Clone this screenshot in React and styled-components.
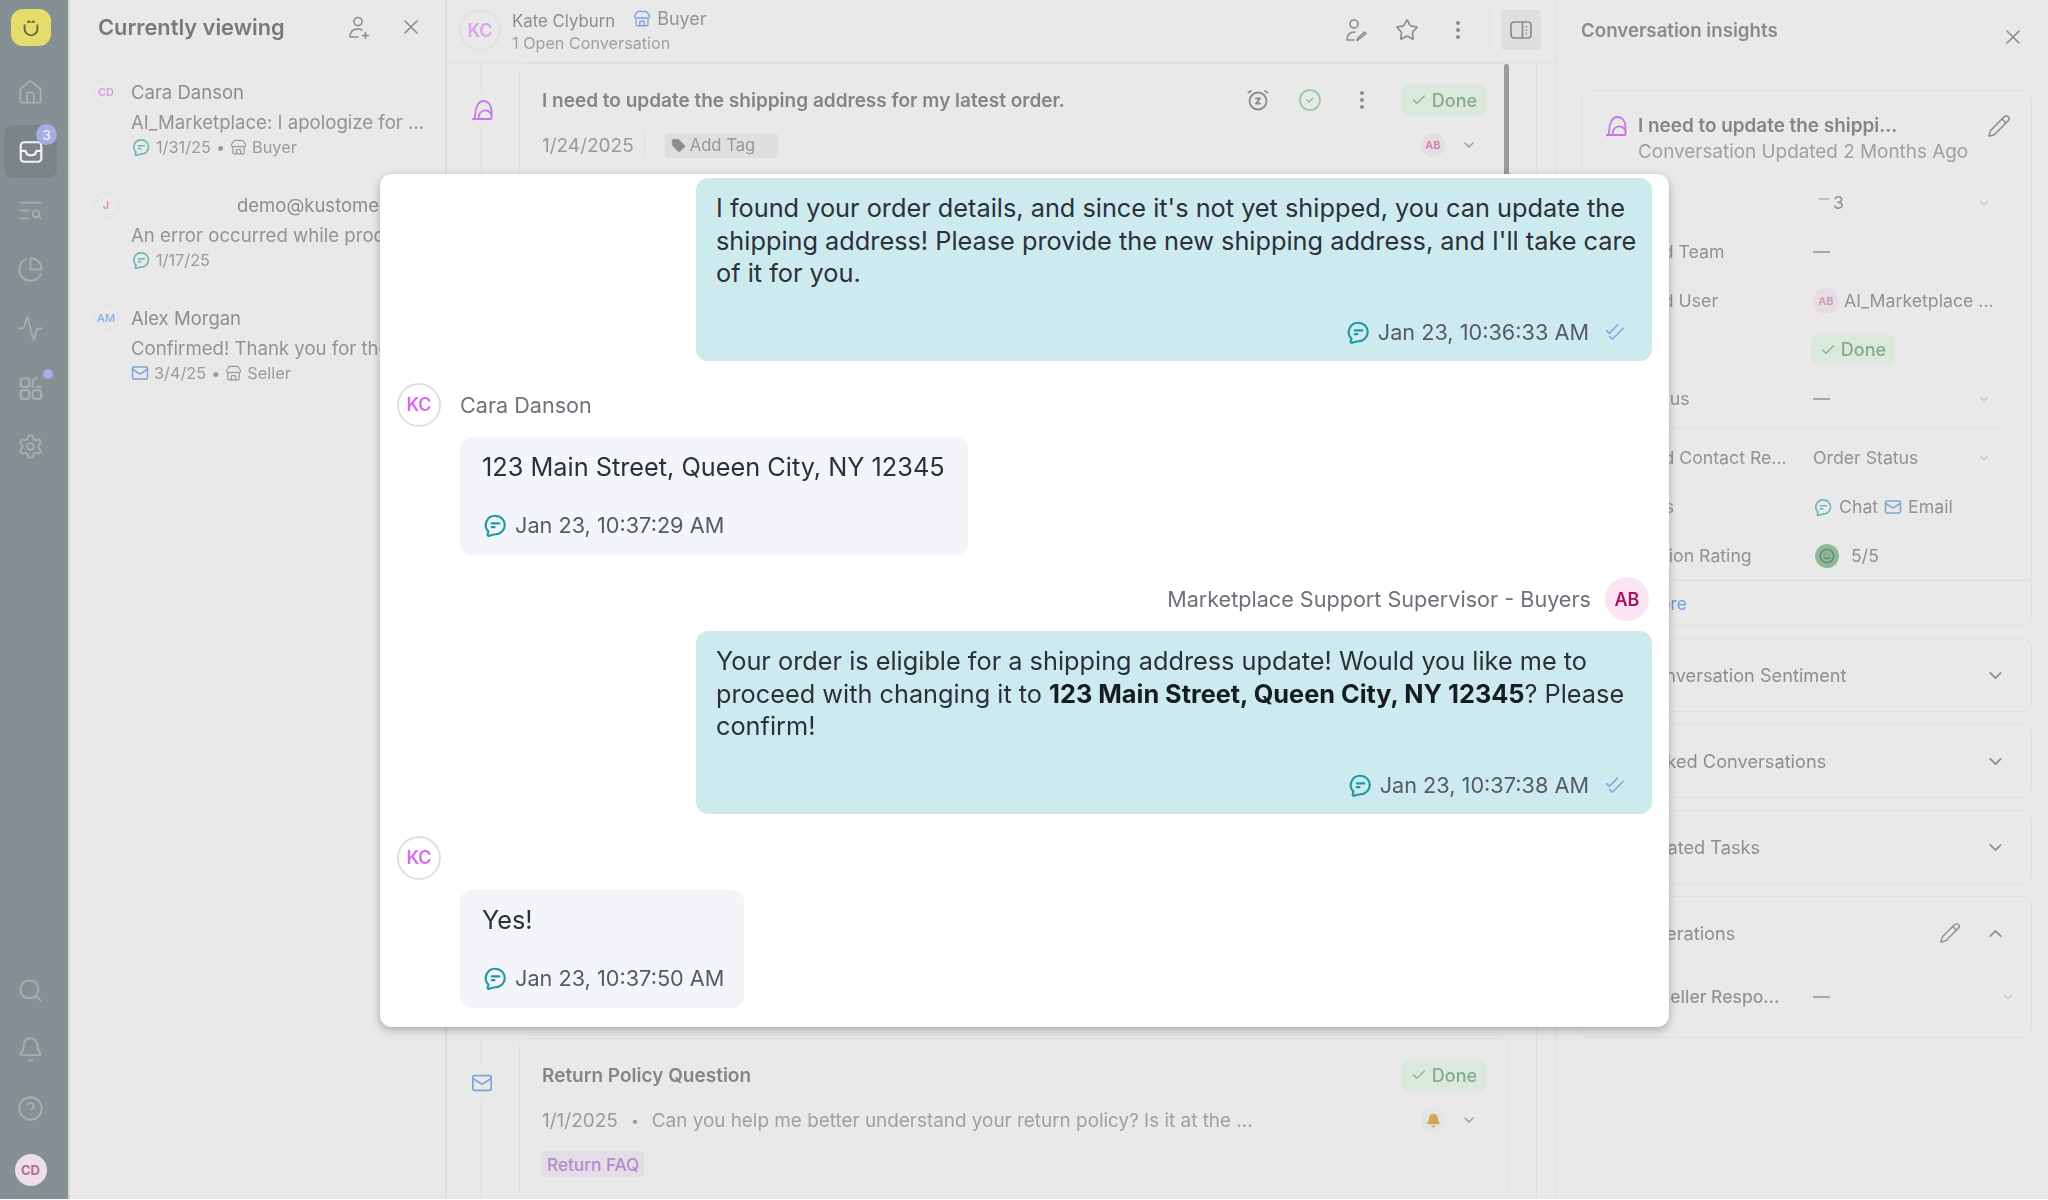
import React from 'react'
import styled, { createGlobalStyle } from 'styled-components'
import {
  Activity, Bell, Check, ChevronDown, ChevronUp, CircleCheck, CircleHelp,
  ChartPie, EllipsisVertical, House, Mail, Pencil, Search, Settings, Smile, Star, Store, Tag, TextSearch, X,
} from 'lucide-react'

const GlobalStyle = createGlobalStyle`
  html, body { margin: 0; padding: 0; background: #fff; }
  body { font-family: Inter, "Liberation Sans", sans-serif; overflow: hidden; }
  * { box-sizing: border-box; }
`

const ChatIcon = ({ size = 26, color = '#1f9aa5', width = 2 }) => (
  <svg width={size} height={size} viewBox="0 0 24 24" fill="none" stroke={color} strokeWidth={width} strokeLinecap="round" strokeLinejoin="round">
    <path d="M12.500 3.500a8.500 8.500 0 0 1 0 17c-2 0-4 .7-6 1.500-.8.3-1.600-.5-1.300-1.300l.8-2.700A8.500 8.500 0 0 1 12.500 3.500Z" />
    <path d="M9 10.500h7M9 14h2.500" />
  </svg>
)

const ReadIcon = () => (
  <svg width="22" height="22" viewBox="0 0 24 24" fill="none" stroke="#7ea4dc" strokeWidth="1.600" strokeLinecap="round" strokeLinejoin="round">
    <path d="M3 10.500l3 3L15 4" />
    <path d="M6 17l3 3L21 8" />
  </svg>
)

const BotIcon = ({ size = 24 }) => (
  <svg width={size} height={size} viewBox="0 0 24 24" fill="none" stroke="#c678e6" strokeWidth="1.800" strokeLinecap="round" strokeLinejoin="round">
    <path d="M3 21.500c1.500-.5 2-1.500 2-3C5 10 8 3 13.500 3c4.500 0 8 4 8 10v7.500a.5.5 0 0 1-.5.5H3Z" />
    <path d="M9 21a6 6 0 0 1 12.500-4" />
  </svg>
)

const LogoIcon = () => (
  <svg width="22" height="22" viewBox="0 0 24 24" fill="none" stroke="#62663c" strokeWidth="2" strokeLinecap="round">
    <path d="M5 9v4a7 7 0 0 0 14 0V9" />
    <path d="M8.500 5.500c.6-.8 1.600-.8 2.200 0M13.300 5.500c.6-.8 1.600-.8 2.200 0" />
  </svg>
)

const InboxIcon = () => (
  <svg width="26" height="26" viewBox="0 0 24 24" fill="none" stroke="#eef2f2" strokeWidth="2" strokeLinecap="round" strokeLinejoin="round">
    <rect x="2.500" y="3" width="19" height="18" rx="3" />
    <path d="M2.500 11h4.500c.5 2.500 2.500 4 5 4s4.500-1.500 5-4h4.500" />
  </svg>
)

const AppsIcon = () => (
  <svg width="26" height="26" viewBox="0 0 24 24" fill="none" stroke="#a3b0b0" strokeWidth="2" strokeLinecap="round">
    <rect x="2.500" y="3" width="8" height="8" rx="2.500" />
    <path d="M13.500 11V7a4 4 0 0 1 4-4M21.500 11h-4" />
    <rect x="2.500" y="14" width="8" height="8" rx="2.500" />
    <rect x="13.500" y="14" width="8" height="8" rx="2.500" />
  </svg>
)

const AssignAddIcon = () => (
  <svg width="24" height="24" viewBox="0 0 24 24" fill="none" stroke="#8c8c8c" strokeWidth="1.600" strokeLinecap="round">
    <circle cx="11" cy="6.500" r="4" />
    <path d="M3 22c0-5 3-8 8-8 1.500 0 3 .3 4 1M3 22h8M15.500 20.500h6M18.500 17.500v6" />
  </svg>
)

const AssignEditIcon = () => (
  <svg width="24" height="24" viewBox="0 0 24 24" fill="none" stroke="#8c8c8c" strokeWidth="1.600" strokeLinecap="round" strokeLinejoin="round">
    <circle cx="10" cy="6" r="4" />
    <path d="M3 22c0-5 3-8 8-8M3 22h7M14 22l-1 .5.500-2 7-6.500 1.500 1.500Z" />
  </svg>
)

const PanelIcon = () => (
  <svg width="24" height="24" viewBox="0 0 24 24" fill="none" stroke="#8c8c8c" strokeWidth="1.700" strokeLinecap="round">
    <rect x="2" y="4" width="20" height="16" rx="3" />
    <path d="M13.500 4v16M17.500 8.500v.1M17.500 12v.1M17.500 15.500v.1" />
  </svg>
)

const SnoozeIcon = () => (
  <svg width="24" height="24" viewBox="0 0 24 24" fill="none" stroke="#8c8c8c" strokeWidth="1.800" strokeLinecap="round" strokeLinejoin="round">
    <circle cx="12" cy="13" r="8.500" />
    <path d="M2.500 4.500 5 3M21.500 4.500 19 3M10 10.500h4l-4 5h4" />
  </svg>
)

const Page = styled.div`
  position: relative;
  width: 2048px;
  height: 1199px;
  overflow: hidden;
  background: #e9e9e9;
  color: #8b8b8b;
`

const Background = styled.div`
  display: grid;
  grid-template-columns: 70px 377px 1110px 491px;
  height: 100%;
  filter: blur(0.35px);
`

const Rail = styled.nav`
  display: flex;
  flex-direction: column;
  justify-content: space-between;
  align-items: center;
  padding: 9px 7px 13px 0;
  background: #868f93;
  border-right: 2px solid #d6d6d6;
`

const RailGroup = styled.div`
  display: flex;
  flex-direction: column;
  align-items: center;
`

const Logo = styled.div`
  display: flex;
  align-items: center;
  justify-content: center;
  width: 40px;
  height: 37px;
  margin-bottom: 20px;
  border-radius: 12px;
  background: #e6dc6b;
`

const RailItem = styled.div`
  position: relative;
  display: flex;
  align-items: center;
  justify-content: center;
  width: 53px;
  height: 53px;
  margin-bottom: 6px;
  border-radius: 9px;
  color: #a3b0b0;
  background: ${p => (p.$active ? '#7c8488' : 'transparent')};
`

const Badge = styled.span`
  position: absolute;
  top: -1px;
  right: 0;
  display: flex;
  align-items: center;
  justify-content: center;
  width: 21px;
  height: 21px;
  border-radius: 50%;
  background: #a6ace4;
  color: #eef;
  font-size: 13px;
  font-weight: 500;
`

const Dot = styled.span`
  position: absolute;
  top: 8px;
  right: 4px;
  width: 10px;
  height: 10px;
  border-radius: 50%;
  background: #a6ace4;
`

const RailAvatar = styled.div`
  display: flex;
  align-items: center;
  justify-content: center;
  width: 32px;
  height: 32px;
  margin-top: 13px;
  border-radius: 50%;
  background: #ecdfe8;
  color: #b56f96;
  font-size: 13px;
  font-weight: 700;
`

const ListPanel = styled.section`
  display: flex;
  flex-direction: column;
  min-width: 0;
  border-right: 2px solid #dedede;
  overflow: hidden;
`

const ListHeader = styled.header`
  display: flex;
  align-items: center;
  height: 54px;
  padding: 0 22px 0 28px;
  margin-bottom: 25px;
`

const ListTitle = styled.h1`
  flex: 1;
  margin: 0;
  color: #777a7d;
  font-size: 21.800px;
  font-weight: 600;
`

const HeaderIcons = styled.div`
  display: flex;
  align-items: center;
  gap: ${p => p.$gap || 28}px;
  color: #8c8c8c;
`

const ListRow = styled.article`
  display: flex;
  gap: 12px;
  height: 113px;
  padding-left: 23px;
`

const Avatar = styled.div`
  flex: none;
  display: flex;
  align-items: center;
  justify-content: center;
  width: ${p => p.$size || 26}px;
  height: ${p => p.$size || 26}px;
  border: ${p => (p.$plain ? 'none' : `${p.$size > 36 ? 2 : 1}px solid #e0e0e0`)};
  border-radius: 50%;
  background: ${p => p.$bg || 'transparent'};
  color: ${p => p.$color || '#d79ae8'};
  font-size: ${p => p.$font || 11}px;
  font-weight: 600;
`

const RowText = styled.div`
  display: flex;
  flex-direction: column;
  min-width: 0;
  white-space: nowrap;
`

const RowName = styled.div`
  height: 26px;
  line-height: 26px;
  margin-left: ${p => p.$indent || 0}px;
  font-size: 18.500px;
  color: #8d8d8d;
`

const RowMessage = styled.div`
  height: 30px;
  padding-top: 4px;
  line-height: 26px;
  font-size: 18.600px;
  color: #939393;
`

const RowMeta = styled.div`
  display: flex;
  align-items: center;
  gap: 5px;
  height: 24px;
  font-size: 16.300px;
  color: #9a9a9a;
`

const ThreadPanel = styled.section`
  display: flex;
  flex-direction: column;
  min-width: 0;
  border-right: 1px solid #dedede;
  overflow: hidden;
`

const ThreadHeader = styled.header`
  flex: none;
  display: flex;
  align-items: center;
  height: 63px;
  padding: 0 15px 2px 12px;
  border-bottom: 1px solid #dfdfdf;
`

const HeaderNames = styled.div`
  flex: 1;
  margin-left: 11px;
`

const NameLine = styled.div`
  display: flex;
  align-items: center;
  height: 28px;
  font-size: 16.800px;
  color: #8d8d8d;
`

const BuyerChip = styled.span`
  display: inline-flex;
  align-items: center;
  gap: 6px;
  margin: -5px 0 0 18px;
  font-size: 18px;
  color: #939393;
`

const OpenCount = styled.div`
  margin-top: -2px;
  font-size: 16.200px;
  line-height: 20px;
  color: #a0a0a0;
`

const HeaderDivider = styled.span`
  width: 1px;
  height: 40px;
  margin: 0 11px 0 19px;
  background: #dfdfdf;
`

const PanelToggle = styled.button`
  display: flex;
  align-items: center;
  justify-content: center;
  width: 40px;
  height: 40px;
  padding: 0;
  border: none;
  border-radius: 4px;
  background: #dfdfe1;
`

const ThreadBody = styled.div`
  flex: 1;
  display: flex;
  flex-direction: column;
  gap: 12px;
  margin-right: 19px;
  padding-right: 27px;
  border-right: 1px solid #dfdfdf;
  overflow: hidden;
`

const Entry = styled.div`
  flex: none;
  position: relative;
  display: flex;
  height: ${p => p.$height}px;
`

const EntryRail = styled.div`
  flex: none;
  position: relative;
  width: 72px;
  &::before {
    content: '';
    position: absolute;
    top: 0;
    bottom: 0;
    left: 34px;
    width: 1px;
    background: #dcdcdc;
  }
`

const EntryIcon = styled.div`
  position: absolute;
  top: ${p => p.$top}px;
  left: 23px;
  display: flex;
  align-items: center;
  justify-content: center;
  width: 24px;
  height: 32px;
  background: #e9e9e9;
`

const Card = styled.article`
  flex: 1;
  min-width: 0;
  position: relative;
  padding: 20px 22px 0;
  border: 1px solid #e0e0e0;
  border-radius: 8px;
`

const Thumb = styled.span`
  position: absolute;
  top: 0;
  right: -1px;
  width: 5px;
  height: 112px;
  border-radius: 3px 3px 0 0;
  background: #9b9b9b;
`

const CardRow = styled.div`
  display: flex;
  align-items: center;
  height: ${p => p.$height}px;
  margin-bottom: ${p => p.$after || 0}px;
`

const CardTitle = styled.h3`
  flex: 1;
  margin: 0;
  font-size: 19px;
  font-weight: 600;
  color: #858585;
`

const DonePill = styled.span`
  display: inline-flex;
  align-items: center;
  justify-content: center;
  gap: 5px;
  width: 84px;
  height: ${p => p.$height || 32}px;
  margin-left: ${p => p.$left || 0}px;
  border-radius: 7px;
  background: #dbe8dc;
  color: #86aa8f;
  font-size: 18px;
  font-weight: 500;
`

const DateText = styled.span`
  font-size: 19px;
  color: #9a9a9a;
`

const CardDivider = styled.span`
  width: 1px;
  height: 28px;
  margin: 0 20px 0 10px;
  background: #dcdcdc;
`

const AddTag = styled.span`
  display: inline-flex;
  align-items: center;
  gap: 4px;
  width: 113px;
  height: 25px;
  padding-left: 6px;
  border-radius: 4px;
  background: #dfdfe1;
  color: #979797;
  font-size: 16.600px;
`

const Spacer = styled.span`
  flex: 1;
`

const CardEnd = styled.span`
  display: flex;
  align-items: center;
  gap: 16px;
  margin-right: 9px;
  color: #999;
`

const Separator = styled.span`
  margin: 0 13px;
  font-size: 14px;
  color: #9a9a9a;
`

const Preview = styled.span`
  font-size: 18.900px;
  color: #a0a0a0;
`

const FaqTag = styled.span`
  display: inline-flex;
  align-items: center;
  height: 26px;
  padding: 0 5px;
  border-radius: 4px;
  background: #e2dde6;
  color: #b58ccb;
  font-size: 17.200px;
  font-weight: 500;
`

const BellMark = styled.span`
  display: flex;
  align-items: center;
  justify-content: center;
  width: 24px;
  height: 24px;
  border-radius: 50%;
  background: #e4e4e4;
  color: #c9a95c;
`

const InsightsPanel = styled.aside`
  display: flex;
  flex-direction: column;
  padding: 0 16px 0 24px;
`

const InsightsHeader = styled.header`
  display: flex;
  justify-content: space-between;
  height: 90px;
  padding: 19px 7px 0 0;
  color: #8c8c8c;
`

const InsightsTitle = styled.h2`
  margin: 0;
  font-size: 18.700px;
  font-weight: 600;
  color: #8b8b8b;
`

const CloseSlot = styled.span`
  margin-top: 6px;
`

const InsightsStack = styled.div`
  display: flex;
  flex-direction: column;
  gap: 12px;
`

const Box = styled.section`
  border: 1px solid #e0e0e2;
  border-radius: 9px;
`

const SummaryHead = styled.div`
  display: flex;
  gap: 10px;
  height: 87px;
  padding: 23px 20px 0 22px;
`

const SummaryText = styled.div`
  flex: 1;
  white-space: nowrap;
`

const SummaryTitle = styled.div`
  height: 26px;
  font-size: 18.900px;
  font-weight: 600;
  color: #858585;
`

const SummarySub = styled.div`
  font-size: 18.900px;
  color: #a0a0a0;
`

const InfoRow = styled.div`
  display: grid;
  grid-template-columns: 217px 1fr 30px;
  align-items: center;
  height: 49px;
  padding: 0 32px 0 14px;
  font-size: 17.700px;
  color: #929292;
  svg.caret {
    justify-self: center;
  }
`

const InfoValue = styled.div`
  display: flex;
  align-items: center;
  gap: ${p => p.$gap || 6}px;
  white-space: nowrap;
`

const Dash = styled.span`
  width: 17px;
  height: 2px;
  background: #a8a8a8;
`

const ScoreMark = styled.span`
  width: 10px;
  height: 2px;
  margin: -8px 0 0 6px;
  background: #a6ccc4;
`

const RowDivider = styled.div`
  height: 1px;
  margin: 5px 32px 4px 23px;
  background: #e0e0e0;
`

const ShowMore = styled.div`
  height: 45px;
  padding: 13px 0 0 14px;
  border-top: 1px solid #dedee0;
  color: #6f9be0;
  font-size: 17px;
`

const FaceMark = styled.span`
  display: flex;
  align-items: center;
  justify-content: center;
  width: 24px;
  height: 24px;
  margin: 0 2px 0 2px;
  border-radius: 50%;
  background: #8fb79a;
  color: #5f8a6c;
`

const AccordionHead = styled.div`
  display: flex;
  align-items: center;
  gap: 24px;
  height: 72px;
  padding: 0 25px 0 59px;
  font-size: 18.200px;
  color: #8e8e8e;
`

const AccordionTitle = styled.span`
  flex: 1;
`

const SubRow = styled.div`
  display: grid;
  grid-template-columns: 154px 1fr 30px;
  align-items: center;
  height: 55px;
  padding: 0 8px 0 77px;
  margin-bottom: 13px;
  font-size: 17.500px;
  font-weight: 500;
  color: #939393;
  svg.caret {
    justify-self: center;
  }
`

const Modal = styled.div`
  position: absolute;
  top: 174px;
  left: 380px;
  display: flex;
  flex-direction: column;
  gap: 22px;
  width: 1289px;
  height: 853px;
  padding: 4px 17px 0;
  border-radius: 12px;
  background: #fff;
  box-shadow: 0 3px 10px rgba(0, 0, 0, 0.28);
  overflow: hidden;
`

const Message = styled.div`
  display: flex;
  flex-direction: column;
  gap: 10px;
  align-items: ${p => (p.$out ? 'flex-end' : 'flex-start')};
`

const Sender = styled.div`
  display: flex;
  align-items: center;
  gap: ${p => (p.$out ? 14 : 19)}px;
  height: 44px;
  margin-right: ${p => (p.$out ? 3 : 0)}px;
  font-size: 21.600px;
  color: #6d7178;
`

const Bubble = styled.div`
  width: ${p => p.$width}px;
  margin-left: ${p => (p.$out ? 0 : 63)}px;
  padding: ${p => (p.$out ? '14px 12px 17px 20px' : '14px 12px 18px 22px')};
  border-radius: 12px;
  background: ${p => (p.$out ? '#cdebef' : '#f4f5f9')};
`

const BubbleText = styled.p`
  margin: 0 0 30px;
  font-size: 25.300px;
  line-height: 32.500px;
  color: #2b3138;
  strong {
    font-weight: 700;
    color: #161c24;
  }
`

const Stamp = styled.div`
  display: flex;
  align-items: center;
  justify-content: ${p => (p.$out ? 'flex-end' : 'flex-start')};
  gap: 7px;
  height: 24px;
  padding-right: ${p => (p.$out ? 14 : 0)}px;
  font-size: 21.700px;
  color: #555b63;
  white-space: nowrap;
`

const ReadMark = styled.span`
  display: flex;
  margin-left: 8px;
`

const rows = [
  { initials: 'CD', color: '#d79ae8', name: 'Cara Danson', text: 'AI_Marketplace: I apologize for ...', date: '1/31/25', kind: 'Buyer', chat: true },
  { initials: 'J', color: '#e58a8a', name: 'demo@kustomer.com', indent: 106, text: 'An error occurred while processing your request', date: '1/17/25', chat: true },
  { initials: 'AM', color: '#8fb2ea', name: 'Alex Morgan', text: 'Confirmed! Thank you for the help with my order', date: '3/4/25', kind: 'Seller' },
]

const Caret = () => <ChevronDown className="caret" size={14} color="#c4c4c4" />

const App = () => {
  return (
    <>
      <GlobalStyle />
      <Page>
        <Background>
          <Rail>
            <RailGroup>
              <Logo><LogoIcon /></Logo>
              <RailItem><House size={27} strokeWidth={1.7} /></RailItem>
              <RailItem $active><InboxIcon /><Badge>3</Badge></RailItem>
              <RailItem><TextSearch size={27} strokeWidth={1.7} /></RailItem>
              <RailItem><ChartPie size={27} strokeWidth={1.7} /></RailItem>
              <RailItem><Activity size={27} strokeWidth={1.7} /></RailItem>
              <RailItem><AppsIcon /><Dot /></RailItem>
              <RailItem><Settings size={27} strokeWidth={1.7} /></RailItem>
            </RailGroup>
            <RailGroup>
              <RailItem><Search size={27} strokeWidth={1.7} /></RailItem>
              <RailItem><Bell size={27} strokeWidth={1.7} /></RailItem>
              <RailItem><CircleHelp size={27} strokeWidth={1.7} /></RailItem>
              <RailAvatar>CD</RailAvatar>
            </RailGroup>
          </Rail>

          <ListPanel>
            <ListHeader>
              <ListTitle>Currently viewing</ListTitle>
              <HeaderIcons $gap={28}>
                <AssignAddIcon />
                <X size={24} strokeWidth={1.6} />
              </HeaderIcons>
            </ListHeader>
            {rows.map(row => (
              <ListRow key={row.initials}>
                <Avatar $color={row.color}>{row.initials}</Avatar>
                <RowText>
                  <RowName $indent={row.indent}>{row.name}</RowName>
                  <RowMessage>{row.text}</RowMessage>
                  <RowMeta>
                    {row.chat ? <ChatIcon size={20} color="#6cb6b4" /> : <Mail size={18} color="#7ea4dc" />}
                    {row.date}
                    {row.kind && <>
                      <span>•</span>
                      <Store size={17} strokeWidth={1.7} />
                      {row.kind}
                    </>}
                  </RowMeta>
                </RowText>
              </ListRow>
            ))}
          </ListPanel>

          <ThreadPanel>
            <ThreadHeader>
              <Avatar $size={42} $font={18} $color="#dba6ea">KC</Avatar>
              <HeaderNames>
                <NameLine>
                  Kate Clyburn
                  <BuyerChip><Store size={18} color="#7ea4dc" strokeWidth={1.8} />Buyer</BuyerChip>
                </NameLine>
                <OpenCount>1 Open Conversation</OpenCount>
              </HeaderNames>
              <HeaderIcons $gap={27}>
                <AssignEditIcon />
                <Star size={24} strokeWidth={1.6} />
                <EllipsisVertical size={24} strokeWidth={2} />
              </HeaderIcons>
              <HeaderDivider />
              <PanelToggle><PanelIcon /></PanelToggle>
            </ThreadHeader>
            <ThreadBody>
              <Entry $height={963}>
                <EntryRail>
                  <EntryIcon $top={31}><BotIcon /></EntryIcon>
                </EntryRail>
                <Card>
                  <Thumb />
                  <CardRow $height={32} $after={15}>
                    <CardTitle>I need to update the shipping address for my latest order.</CardTitle>
                    <HeaderIcons $gap={28}>
                      <SnoozeIcon />
                      <CircleCheck size={24} color="#8ccb97" strokeWidth={1.6} />
                      <EllipsisVertical size={24} strokeWidth={2} />
                    </HeaderIcons>
                    <DonePill $left={28}><Check size={16} strokeWidth={1.8} />Done</DonePill>
                  </CardRow>
                  <CardRow $height={28}>
                    <DateText>1/24/2025</DateText>
                    <CardDivider />
                    <AddTag><Tag size={15} fill="#8d8d8d" strokeWidth={1} />Add Tag</AddTag>
                    <Spacer />
                    <CardEnd>
                      <Avatar $size={24} $plain $bg="#e6dde3" $color="#cf7fa9">AB</Avatar>
                      <ChevronDown size={16} />
                    </CardEnd>
                  </CardRow>
                </Card>
              </Entry>
              <Entry $height={162}>
                <EntryRail>
                  <EntryIcon $top={29}><Mail size={22} color="#7ea4dc" strokeWidth={1.9} /></EntryIcon>
                </EntryRail>
                <Card>
                  <CardRow $height={32} $after={15}>
                    <CardTitle>Return Policy Question</CardTitle>
                    <DonePill><Check size={16} strokeWidth={1.8} />Done</DonePill>
                  </CardRow>
                  <CardRow $height={28} $after={17}>
                    <DateText>1/1/2025</DateText>
                    <Separator>•</Separator>
                    <Preview>Can you help me better understand your return policy? Is it at the ...</Preview>
                    <Spacer />
                    <CardEnd>
                      <BellMark><Bell size={15} fill="#c9a95c" /></BellMark>
                      <ChevronDown size={16} />
                    </CardEnd>
                  </CardRow>
                  <FaqTag>Return FAQ</FaqTag>
                </Card>
              </Entry>
            </ThreadBody>
          </ThreadPanel>

          <InsightsPanel>
            <InsightsHeader>
              <InsightsTitle>Conversation insights</InsightsTitle>
              <CloseSlot><X size={24} strokeWidth={1.6} /></CloseSlot>
            </InsightsHeader>
            <InsightsStack>
              <Box>
                <SummaryHead>
                  <BotIcon />
                  <SummaryText>
                    <SummaryTitle>I need to update the shippi...</SummaryTitle>
                    <SummarySub>Conversation Updated 2 Months Ago</SummarySub>
                  </SummaryText>
                  <Pencil size={24} strokeWidth={1.5} />
                </SummaryHead>
                <InfoRow>Priority<InfoValue $gap={4}><ScoreMark />3</InfoValue><Caret /></InfoRow>
                <InfoRow>Assigned Team<InfoValue><Dash /></InfoValue></InfoRow>
                <InfoRow>Assigned User<InfoValue $gap={5}><Avatar $size={26} $plain $bg="#e6dde3" $color="#d195b5">AB</Avatar>AI_Marketplace ...</InfoValue></InfoRow>
                <InfoRow>Status<InfoValue><DonePill $height={30} $left={-2}><Check size={16} strokeWidth={1.8} />Done</DonePill></InfoValue></InfoRow>
                <InfoRow>Sub-Status<InfoValue><Dash /></InfoValue><Caret /></InfoRow>
                <RowDivider />
                <InfoRow>Expected Contact Re...<InfoValue>Order Status</InfoValue><Caret /></InfoRow>
                <InfoRow>Channels<InfoValue><ChatIcon size={20} color="#6cb6b4" />Chat<Mail size={18} color="#7ea4dc" />Email</InfoValue></InfoRow>
                <InfoRow>Satisfaction Rating<InfoValue $gap={10}><FaceMark><Smile size={16} /></FaceMark>5/5</InfoValue></InfoRow>
                <ShowMore>Show more</ShowMore>
              </Box>
              <Box><AccordionHead><AccordionTitle>Conversation Sentiment</AccordionTitle><ChevronDown size={21} /></AccordionHead></Box>
              <Box><AccordionHead><AccordionTitle>Linked Conversations</AccordionTitle><ChevronDown size={21} /></AccordionHead></Box>
              <Box><AccordionHead><AccordionTitle>Related Tasks</AccordionTitle><ChevronDown size={21} /></AccordionHead></Box>
              <Box>
                <AccordionHead>
                  <AccordionTitle>Operations</AccordionTitle>
                  <Pencil size={22} strokeWidth={1.5} />
                  <ChevronUp size={21} />
                </AccordionHead>
                <SubRow>Seller Respo...<InfoValue><Dash /></InfoValue><Caret /></SubRow>
              </Box>
            </InsightsStack>
          </InsightsPanel>
        </Background>

        <Modal>
          <Message $out>
            <Bubble $out $width={956}>
              <BubbleText>I found your order details, and since it's not yet shipped, you can update the shipping address! Please provide the new shipping address, and I'll take care of it for you.</BubbleText>
              <Stamp $out>
                <ChatIcon />
                Jan 23, 10:36:33 AM
                <ReadMark><ReadIcon /></ReadMark>
              </Stamp>
            </Bubble>
          </Message>

          <Message>
            <Sender><Avatar $size={44} $font={18} $color="#d56bf0">KC</Avatar>Cara Danson</Sender>
            <Bubble $width={508}>
              <BubbleText>123 Main Street, Queen City, NY 12345</BubbleText>
              <Stamp>
                <ChatIcon />
                Jan 23, 10:37:29 AM
              </Stamp>
            </Bubble>
          </Message>

          <Message $out>
            <Sender $out>
              Marketplace Support Supervisor - Buyers
              <Avatar $size={44} $font={18} $plain $bg="#fbe4f3" $color="#a8145f">AB</Avatar>
            </Sender>
            <Bubble $out $width={956}>
              <BubbleText>Your order is eligible for a shipping address update! Would you like me to proceed with changing it to <strong>123 Main Street, Queen City, NY 12345</strong>? Please confirm!</BubbleText>
              <Stamp $out>
                <ChatIcon />
                Jan 23, 10:37:38 AM
                <ReadMark><ReadIcon /></ReadMark>
              </Stamp>
            </Bubble>
          </Message>

          <Message>
            <Sender><Avatar $size={44} $font={18} $color="#d56bf0">KC</Avatar></Sender>
            <Bubble $width={284}>
              <BubbleText>Yes!</BubbleText>
              <Stamp>
                <ChatIcon />
                Jan 23, 10:37:50 AM
              </Stamp>
            </Bubble>
          </Message>
        </Modal>
      </Page>
    </>
  )
}

export default App
